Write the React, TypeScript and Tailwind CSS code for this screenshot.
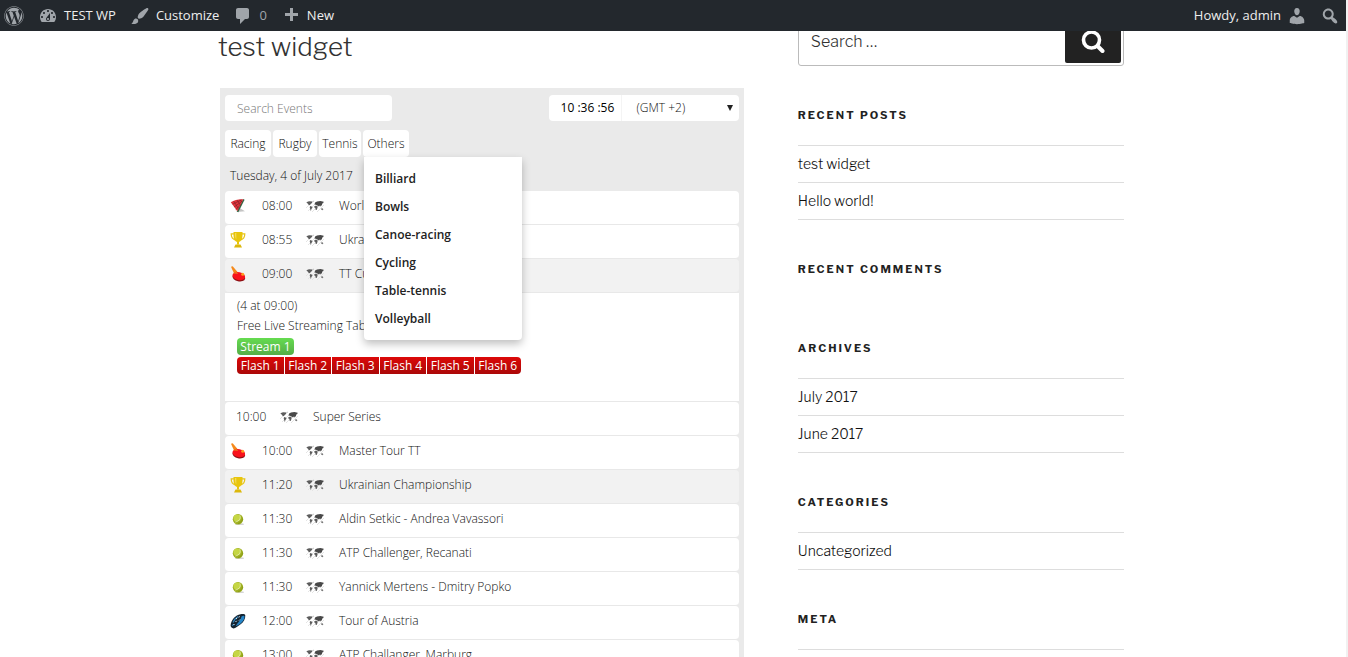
import React from "react";
import { FaWordpress } from "react-icons/fa";

const DASHICONS = {
  dashboard:
    "M3.76 16h12.48c1.1-1.37 1.76-3.11 1.76-5 0-4.42-3.58-8-8-8s-8 3.58-8 8c0 1.89.66 3.63 1.76 5zM10 4c.55 0 1 .45 1 1s-.45 1-1 1-1-.45-1-1 .45-1 1-1zM6 6c.55 0 1 .45 1 1s-.45 1-1 1-1-.45-1-1 .45-1 1-1zm8 0c.55 0 1 .45 1 1s-.45 1-1 1-1-.45-1-1 .45-1 1-1zm-5.37 5.55L12 7v6c0 1.1-.9 2-2 2s-2-.9-2-2c0-.57.24-1.08.63-1.45zM4 10c.55 0 1 .45 1 1s-.45 1-1 1-1-.45-1-1 .45-1 1-1zm12 0c.55 0 1 .45 1 1s-.45 1-1 1-1-.45-1-1 .45-1 1-1zm-5 3c0-.55-.45-1-1-1s-1 .45-1 1 .45 1 1 1 1-.45 1-1z",
  customize:
    "M18.33 3.57s.27-.8-.31-1.36c-.53-.52-1.22-.24-1.22-.24-.61.3-5.76 3.47-7.67 5.57-.86.96-2.06 3.79-1.09 4.82.92.98 3.96-.17 4.79-1 2.06-2.06 5.21-7.17 5.5-7.79zM1.4 17.65c2.37-1.56 1.46-3.41 3.23-4.64.93-.65 2.22-.62 3.08.29.63.67.8 2.57-.16 3.46-1.57 1.45-4 1.55-6.15.89z",
  comment: "M5 2h9c1.1 0 2 .9 2 2v7c0 1.1-.9 2-2 2h-2l-5 5v-5H5c-1.1 0-2-.9-2-2V4c0-1.1.9-2 2-2z",
  plus: "M17 7v3h-5v5H9v-5H4V7h5V2h3v5h5z",
  search:
    "M12.14 4.18c1.87 1.87 2.11 4.75.72 6.89.12.1.22.21.36.31.2.16.47.36.81.59.34.24.56.39.66.47.42.31.73.57.94.78.32.32.6.65.84 1 .25.35.44.69.59 1.04.14.35.21.68.18 1-.02.32-.14.59-.36.81s-.49.34-.81.36c-.31.02-.65-.04-.99-.19-.35-.14-.7-.34-1.04-.59-.35-.24-.68-.52-1-.84-.21-.21-.47-.52-.77-.93-.1-.13-.25-.35-.47-.66-.22-.32-.4-.57-.56-.78-.16-.2-.29-.35-.44-.5-2.07 1.09-4.69.76-6.44-.98-2.14-2.15-2.14-5.64 0-7.78 2.15-2.15 5.63-2.15 7.78 0zm-1.41 6.36c1.36-1.37 1.36-3.58 0-4.95-1.37-1.37-3.59-1.37-4.95 0-1.37 1.37-1.37 3.58 0 4.95 1.36 1.37 3.58 1.37 4.95 0z",
  user: "M10 9.25c-2.27 0-2.73-3.44-2.73-3.44C7 4.02 7.82 2 9.97 2c2.16 0 2.98 2.02 2.71 3.81 0 0-.41 3.44-2.68 3.44zm0 2.57L12.72 10c2.39 0 4.52 2.33 4.52 4.53v2.49s-3.65 1.13-7.24 1.13c-3.65 0-7.24-1.13-7.24-1.13v-2.49c0-2.25 1.94-4.48 4.47-4.48z",
};

function Dashicon({ name }: { name: keyof typeof DASHICONS }) {
  return (
    <svg viewBox="0 0 20 20" className="size-5 shrink-0 fill-[#a0a5aa]" aria-hidden="true">
      <path d={DASHICONS[name]} />
    </svg>
  );
}

type Sport = "bowls" | "trophy" | "paddle" | "tennis" | "helmet";

function SportIcon({ sport }: { sport: Sport }) {
  return (
    <svg viewBox="0 0 16 16" className="size-4 shrink-0" aria-hidden="true">
      {sport === "bowls" && (
        <>
          <path d="M7 14l8-.8-5-3z" fill="#c4c4c4" />
          <path d="M13.300 1l1.300.8-6.300 12.400-1.600-.6z" fill="#2e6b45" />
          <path d="M.8 4.200C4 2 9 1 13.400 1.300L7.300 13.300z" fill="#e0343b" />
          <path
            d="M2.500 6.300l9-4.500M4 9l8.500-6M5.700 11.500l5.500-5M3.800 3.200l4.700 7.500M7 2l3.500 5.300M10 1.500l2 3"
            stroke="#7a2028"
            strokeWidth=".6"
            fill="none"
          />
        </>
      )}
      {sport === "trophy" && (
        <>
          <path
            d="M4 1.800H1.200c0 3.500 1.200 5.400 4 6M12 1.800h2.800c0 3.500-1.200 5.400-4 6"
            fill="none"
            stroke="#e6c416"
            strokeWidth="1.200"
          />
          <path d="M3.500 0h9v3.500c0 3.700-1.600 6-3.500 6.500v2.500H7V10C5.100 9.500 3.500 7.200 3.500 3.500z" fill="#e8c50c" />
          <path d="M5 1h1.300v6.500C5.500 6.500 5 4.500 5 3z" fill="#f3da55" />
          <path d="M5.500 12.500h5L12 15.500H4z" fill="#dcb80c" />
        </>
      )}
      {sport === "paddle" && (
        <>
          <path d="M1 .8L2.700.3 7.500 6 4.500 8.600z" fill="#f58a1c" />
          <ellipse cx="8.800" cy="11.300" rx="6.400" ry="4" transform="rotate(12 8.800 11.300)" fill="#8d0f14" />
          <ellipse cx="8.800" cy="10.100" rx="6.400" ry="4" transform="rotate(12 8.800 10.100)" fill="#f8121c" />
          <path d="M3 7.500l3.500-2.200 1.500 2.700z" fill="#ee6d1c" />
          <circle cx="12.700" cy="8.200" r="1.500" fill="#ff9c1f" />
        </>
      )}
      {sport === "tennis" && (
        <>
          <ellipse cx="9.500" cy="13.200" rx="4.500" ry=".9" fill="#d6d6d6" />
          <circle cx="8" cy="8.300" r="5.200" fill="#9fb021" />
          <circle cx="7" cy="7" r="3.600" fill="#c5d645" />
          <path d="M9.800 4.200c1.400 2.800-.2 5.800-4.500 6.800" fill="none" stroke="#e4ecae" strokeWidth=".8" />
          <path d="M12.500 7.500c0 2.500-2 4.500-4.500 5" fill="none" stroke="#8a9a1d" strokeWidth="1" />
        </>
      )}
      {sport === "helmet" && (
        <>
          <path
            d="M.6 12.500C1 7 5.500 1.800 10.500 1.200c2.800-.4 4.700 0 4.800 1.300.2 3.500-1.800 7-5 9C8 13.300 5.500 15 3.500 15.500 2 15 .8 14.300.6 12.500z"
            fill="#152431"
          />
          <path d="M11.500 3.500c1.500-1 2.900-1 3 0 .1 2.500-1.500 5.300-4.200 7.200-1.300.8-3 2-4.500 2.500C7.500 9.500 10.500 8 11.500 3.500z" fill="#2585c8" />
          <path d="M3 9.500c1-2.500 3-4.800 5-6M2 12.500l2-1" stroke="#2f7fb5" strokeWidth="1.200" fill="none" />
          <path d="M6 6l1.200-1M8.500 4.200l1.300-.6M5.500 9l1.200-1.200M9 7.500l1-1M3.500 12l1-1" stroke="#dceefa" strokeWidth="1" />
        </>
      )}
    </svg>
  );
}

function WorldMap() {
  return (
    <svg viewBox="0 0 18 12" className="h-3 w-[18px] shrink-0" aria-hidden="true">
      <path d="M0 8l6-6M2 11l9-9M6 12L16 2M11 12l7-7" stroke="#e4e4e4" strokeWidth="1" />
      <path
        d="M.3 2.200L3 1.300l3.600.2-.6 1.400-1.300 1.200-.8 1.200-1.400-.5L1.400 3.300zM4.200 6.100l2 .7.300 1-1.100 1.200-.5 2.200-.8-2.400-.4-1.500zM8.300 6.200l2-.6 1.400 1.200-.4 1.600-.7 1.700-.9-.1-.3-2-1.100-.6z"
        fill="#5c5c5c"
      />
      <path
        d="M8.500 4.600l.6-2L11 1.500l3.400-.5 3.300.8-.4 1.300-1 .3-.5 2-1.200.3-.5 1.100-.9-1.200-.9.900-1.100-1.300-1.400-.5z"
        fill="#484848"
      />
      <path d="M15 8.500l1.500-.3.900 1.100-.8.900-1.300-.4z" fill="#777" />
      <path d="M6.700 1l1.300-.2-.4 1z" fill="#999" />
    </svg>
  );
}

interface EventItem {
  time: string;
  title: string;
  sport?: Sport;
  shaded?: boolean;
}

const MORNING: EventItem[] = [
  { time: "08:00", title: "World Games", sport: "bowls" },
  { time: "08:55", title: "Ukrainian Championship", sport: "trophy" },
  { time: "09:00", title: "TT Cup", sport: "paddle", shaded: true },
];

const LATER: EventItem[] = [
  { time: "10:00", title: "Super Series" },
  { time: "10:00", title: "Master Tour TT", sport: "paddle" },
  { time: "11:20", title: "Ukrainian Championship", sport: "trophy", shaded: true },
  { time: "11:30", title: "Aldin Setkic - Andrea Vavassori", sport: "tennis" },
  { time: "11:30", title: "ATP Challenger, Recanati", sport: "tennis" },
  { time: "11:30", title: "Yannick Mertens - Dmitry Popko", sport: "tennis" },
  { time: "12:00", title: "Tour of Austria", sport: "helmet" },
  { time: "13:00", title: "ATP Challanger, Marburg", sport: "tennis" },
];

function EventRow({ event }: { event: EventItem }) {
  return (
    <li
      className={`flex h-[34px] items-center rounded-sm border-b border-[#e8e8e8] pb-1 ${
        event.shaded ? "bg-[#f2f2f2]" : "bg-white"
      } ${event.sport ? "pl-[5px]" : "pl-[11px]"}`}
    >
      {event.sport && (
        <span className="mr-4 flex">
          <SportIcon sport={event.sport} />
        </span>
      )}
      <time className="w-11">{event.time}</time>
      <WorldMap />
      <span className="ml-[15px]">{event.title}</span>
    </li>
  );
}

const FLASH = ["Flash 1", "Flash 2", "Flash 3", "Flash 4", "Flash 5", "Flash 6"];
const OTHER_SPORTS = ["Billiard", "Bowls", "Canoe-racing", "Cycling", "Table-tennis", "Volleyball"];

function EventsWidget() {
  return (
    <section className="-mr-px ml-0.5 bg-[#eaeaea] px-[5px] pt-[7px] font-['Open_Sans',sans-serif] text-[12px] leading-5 font-light text-[#111]">
      <div className="flex items-center justify-between">
        <input
          type="search"
          aria-label="Search Events"
          placeholder="Search Events"
          className="h-[26px] w-[167px] rounded-sm bg-white px-3 placeholder:text-[#777]"
        />
        <div className="flex">
          <time className="flex h-[26px] w-[72px] items-center justify-center rounded-l-sm bg-white pl-1 font-normal text-black">
            10 :36 :56
          </time>
          <div className="relative">
            <select
              aria-label="Time zone"
              className="h-[26px] w-[118px] appearance-none rounded-r-sm border-l border-[#f4f4f4] bg-white pl-[14px]"
            >
              <option>(GMT +2)</option>
            </select>
            <svg
              viewBox="0 0 6 6"
              className="pointer-events-none absolute top-[10px] right-[6px] size-1.5 fill-[#222]"
              aria-hidden="true"
            >
              <path d="M0 0h6L3 6z" />
            </svg>
          </div>
        </div>
      </div>

      <nav className="mt-[9px] flex gap-0.5">
        <button className="h-[27px] w-[46px] rounded-sm bg-white">Racing</button>
        <button className="h-[27px] w-11 rounded-sm bg-white">Rugby</button>
        <button className="h-[27px] w-[42px] rounded-sm bg-white">Tennis</button>
        <div className="relative">
          <button className="h-[27px] w-[46px] rounded-sm bg-white" aria-expanded="true">
            Others
          </button>
          <ul className="absolute top-full left-0 z-10 ml-px w-[158px] rounded-b-sm bg-white pt-2 pb-[7px] font-semibold text-[#222] shadow-[0_4px_8px_rgba(0,0,0,0.25)]">
            {OTHER_SPORTS.map((sport) => (
              <li key={sport}>
                <a href="#" className="block px-[11px] py-1">
                  {sport}
                </a>
              </li>
            ))}
          </ul>
        </div>
      </nav>

      <h2 className="pt-[9px] pb-[5px] pl-[5px]">Tuesday, 4 of July 2017</h2>

      <ul>
        {MORNING.map((event) => (
          <EventRow key={event.time} event={event} />
        ))}
        <li className="border-b border-[#e8e8e8] bg-white px-3 pt-[3px] pb-[27px]">
          <p>(4 at 09:00)</p>
          <p>Free Live Streaming Table Tennis</p>
          <div className="mt-0.5 flex font-normal">
            <a
              href="#"
              className="flex h-[17px] w-[57px] items-center justify-center rounded-[4px] bg-linear-to-b from-[#65dc50] to-[#55ad47] text-white"
            >
              Stream 1
            </a>
          </div>
          <div className="mt-0.5 grid w-[284px] grid-cols-6 gap-px font-normal">
            {FLASH.map((label) => (
              <a
                key={label}
                href="#"
                className="flex h-[17px] items-center justify-center bg-linear-to-b from-[#dc0808] to-[#ab0808] text-white first:rounded-l-[4px] last:rounded-r-[4px]"
              >
                {label}
              </a>
            ))}
          </div>
        </li>
        {LATER.map((event) => (
          <EventRow key={event.time + event.title} event={event} />
        ))}
      </ul>
    </section>
  );
}

function SidebarSection({ title, items }: { title: string; items?: string[] }) {
  return (
    <section className="pb-10">
      <h2 className="mb-[21px] text-[11px] leading-[18px] font-bold tracking-[2px] text-[#222] uppercase">{title}</h2>
      {items && (
        <ul className="border-t border-[#ddd]">
          {items.map((item) => (
            <li key={item} className="border-b border-[#ddd] py-1.5 text-[14px] leading-6">
              <a href="#" className="text-[#111]">
                {item}
              </a>
            </li>
          ))}
        </ul>
      )}
    </section>
  );
}

function AdminBar() {
  return (
    <header className="fixed inset-x-0 top-0 z-20 mr-0.5 flex h-[31px] items-center justify-between bg-[#23282d] font-['Open_Sans',sans-serif] text-[13px] font-normal text-[#eee]">
      <nav className="flex items-center">
        <a href="#" aria-label="About WordPress" className="ml-1 flex">
          <FaWordpress className="size-5 text-[#a0a5aa]" />
        </a>
        <a href="#" className="ml-[14px] flex items-center gap-[6px]">
          <Dashicon name="dashboard" />
          TEST WP
        </a>
        <a href="#" className="ml-[14px] flex items-center gap-[6px]">
          <Dashicon name="customize" />
          Customize
        </a>
        <a href="#" className="ml-[14px] flex items-center gap-[6px] text-[#a0a5aa]">
          <Dashicon name="comment" />
          0
        </a>
        <a href="#" className="ml-[14px] flex items-center gap-[6px]">
          <Dashicon name="plus" />
          New
        </a>
      </nav>
      <nav className="flex items-center">
        <a href="#" className="flex items-center gap-[6px]">
          Howdy, admin
          <Dashicon name="user" />
        </a>
        <button aria-label="Search" className="mr-[6px] ml-[13px] flex">
          <Dashicon name="search" />
        </button>
      </nav>
    </header>
  );
}

export default function App() {
  return (
    <div className="h-screen overflow-hidden border-r-2 border-[#f1f1f1] bg-white pt-[31px] font-['Libre_Franklin',Roboto,sans-serif] font-light text-[#333]">
      <AdminBar />
      <div className="pr-1">
        <div className="mx-auto flex max-w-[906px] items-start justify-between">
          <main className="w-[58%]">
            <h1 className="mb-[25px] text-[26px] leading-8">test widget</h1>
            <EventsWidget />
          </main>
          <aside className="w-[36%]">
            <form className="-mt-3.5 mb-10 flex h-[49px] rounded-[3px] border border-[#bbb] p-0.5">
              <input
                type="search"
                aria-label="Search"
                placeholder="Search …"
                className="min-w-0 flex-1 pl-[10px] text-[16px] placeholder:text-[#333]"
              />
              <button
                type="button"
                aria-label="Submit search"
                className="flex w-14 items-center justify-center rounded-xs bg-[#222]"
              >
                <svg viewBox="0 0 24 24" className="size-6" fill="none" stroke="#fff" aria-hidden="true">
                  <circle cx="10.500" cy="10" r="8" strokeWidth="3.600" />
                  <path d="M16.500 16l5 5" strokeWidth="4" strokeLinecap="round" />
                </svg>
              </button>
            </form>
            <SidebarSection title="Recent Posts" items={["test widget", "Hello world!"]} />
            <SidebarSection title="Recent Comments" />
            <SidebarSection title="Archives" items={["July 2017", "June 2017"]} />
            <SidebarSection title="Categories" items={["Uncategorized"]} />
            <SidebarSection title="Meta" items={["Site Admin"]} />
          </aside>
        </div>
      </div>
    </div>
  );
}
